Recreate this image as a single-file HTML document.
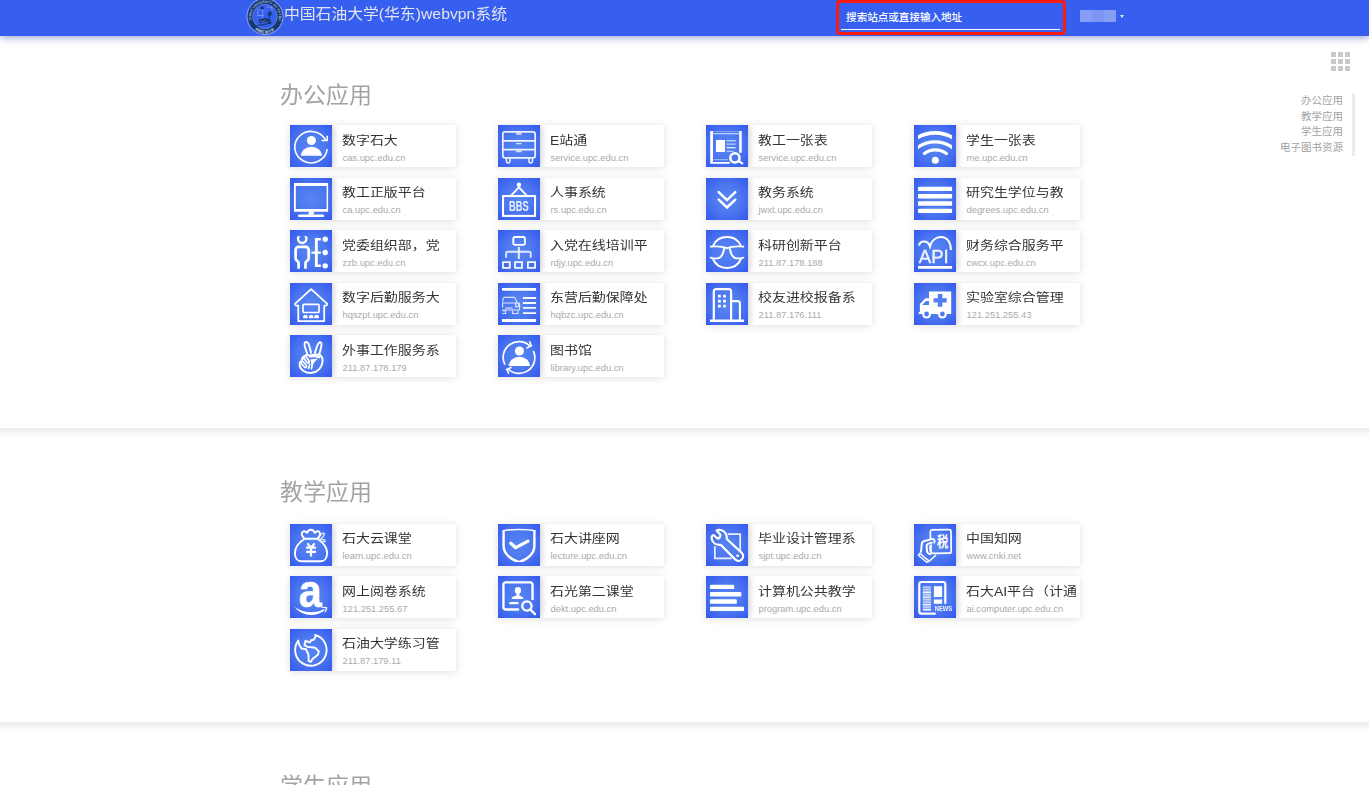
<!DOCTYPE html>
<html lang="zh-CN">
<head>
<meta charset="utf-8">
<title>中国石油大学(华东)webvpn系统</title>
<style>
*{margin:0;padding:0;box-sizing:border-box}
html,body{width:1369px;height:785px;overflow:hidden;background:#fff}
body{position:relative;font-family:"Liberation Sans","Noto Sans CJK SC",sans-serif;color:#333}
a{text-decoration:none;color:inherit}
.sec{position:absolute;left:-30px;width:1429px;background:#fff;box-shadow:0 3px 10px rgba(0,0,0,.1)}
.s1{top:0;height:428px}
.s2{top:428px;height:294px}
.s3{top:722px;height:200px;box-shadow:none}
.sec h2{position:absolute;left:309.6px;font-weight:400;font-size:22.3px;line-height:30px;color:#a3a3a3;white-space:nowrap;transform:scaleX(1.03);transform-origin:0 0}
.s1 h2{top:80.5px}
.s2 h2{top:50px}
.s3 h2{top:50px}
.sec .card{top:0}
.card{position:absolute;margin-left:30px;width:166px;height:42px;background:#fff;box-shadow:0 1px 8px rgba(0,0,0,.13);display:block;overflow:hidden}
.s2 .card{margin-top:-428px}
.ico{position:absolute;left:0;top:0;width:42px;height:42px;background:radial-gradient(circle at 50% 50%,#5685f1 0%,#4d79f0 45%,#3558ee 100%);box-shadow:1px 0 7px rgba(0,0,0,.22)}
.ico svg{display:block}
.tt{position:absolute;left:51.65px;top:7px;width:100px;font-size:12px;line-height:18px;color:#333;white-space:nowrap;overflow:hidden;transform:scaleX(1.163);transform-origin:0 0}
.url{position:absolute;left:52.5px;top:27px;font-size:9.35px;line-height:12px;color:#aaa;white-space:nowrap}
.hdr{position:absolute;left:0;top:0;width:1369px;height:36px;background:#365ff0;box-shadow:0 1px 8px rgba(40,60,170,.55)}
.logo{position:absolute;left:245.5px;top:-2px}
.title{position:absolute;left:283.6px;top:3px;font-size:15.3px;line-height:22px;color:#e3e4ea;white-space:nowrap;transform:scaleX(1.033);transform-origin:0 0}
.search{position:absolute;left:835.5px;top:0;width:230.5px;height:35px;border:3px solid #fc1a10;border-radius:4px}
.ph{position:absolute;left:7.6px;top:6.8px;font-size:10.55px;line-height:14px;font-weight:500;color:#fff;white-space:nowrap}
.ul{position:absolute;left:2.5px;top:25.8px;width:218.6px;height:1.4px;background:#fff}
.user{position:absolute;left:1080px;top:10px;width:36px;height:12px;background:linear-gradient(90deg,#859df5 0,#859df5 33%,#7d96f3 33%,#7d96f3 66%,#859df5 66%,#859df5 100%)}
.caret{position:absolute;left:1120px;top:15px;border:2px solid transparent;border-top:3px solid #e6eaf8;width:0;height:0}
.grid{position:absolute;left:1331px;top:52px;width:20px;height:20px}
.grid i{position:absolute;width:5px;height:5px;background:#c9c9c9}
.grid i:nth-child(3n+1){left:0}.grid i:nth-child(3n+2){left:7px}.grid i:nth-child(3n){left:14px}
.grid i:nth-child(-n+3){top:0}.grid i:nth-child(n+4):nth-child(-n+6){top:7px}.grid i:nth-child(n+7){top:14px}
.nav{position:absolute;right:26px;top:93px;text-align:right;font-size:10.5px;line-height:15.6px;color:#a3a3a3}
.nav a{display:block;white-space:nowrap}
.navbar{position:absolute;left:1352px;top:93px;width:2.5px;height:63px;background:#ececec}

</style>
</head>
<body>
<div class="sec s3"><h2>学生应用</h2></div>
<div class="sec s2"><h2>教学应用</h2>
<a class="card" style="left:290px;top:523.75px"><span class="ico"><svg viewBox="0 0 42 42" width="42" height="42"><g fill="none" stroke="#fff" stroke-linejoin="round"><path d="M14.6 14.8C9 18.5 4.9 23.5 4.9 29C4.9 34 7.5 37.3 11.5 37.3H30.5C34.5 37.3 37.1 34 37.1 29C37.1 23.5 33 18.5 27.4 14.8Z" stroke-width="1.9"/><path d="M14.6 14.8C12.5 12.5 11.3 10.5 11.8 9C12.5 6.8 15.2 6.6 16.9 8.9C18 6.5 19.5 5.8 20.9 5.8C22.3 5.8 23.8 6.5 24.9 8.9C26.6 6.6 29.3 6.8 30 9C30.5 10.5 29.3 12.5 27.4 14.8" stroke-width="1.9"/><path d="M28.6 14.4C30 11 32.5 8.5 34 9.3C35.2 10.2 33 13.5 30 15.8M31 15.9C33 15.2 35.3 15.8 35.2 17C35.1 18 33.5 17.9 32.4 17.3" stroke-width="1.3" opacity=".85"/><path d="M17.4 19.4L21 23.6L24.6 19.4M21 23.6V32.4M16.1 23.7H25.9M16.1 27.8H25.9" stroke-width="2.2"/></g></svg></span><span class="tt" style="margin-top:-0.75px">石大云课堂</span><span class="url" style="margin-top:-0.75px">learn.upc.edu.cn</span></a>
<a class="card" style="left:498px;top:523.75px"><span class="ico"><svg viewBox="0 0 42 42" width="42" height="42"><clipPath id="cs"><rect x="0" y="0" width="42" height="38.1"/></clipPath><g fill="none" stroke="#fff" clip-path="url(#cs)"><path d="M5.6 6.6V22C5.6 29.5 12.5 35.6 21 38.2C29.5 35.6 36.4 29.5 36.4 22V6.6" stroke-width="2.4"/><path d="M4.6 6.9C10 5.6 16 5.4 21 5.4C26 5.4 32 5.6 37.4 6.9" stroke-width="1.5"/></g><path d="M12.8 19.2L17.7 23.7L30 17.2" fill="none" stroke="#fff" stroke-width="3.2" stroke-linecap="round" stroke-linejoin="round"/></svg></span><span class="tt" style="margin-top:-0.75px">石大讲座网</span><span class="url" style="margin-top:-0.75px">lecture.upc.edu.cn</span></a>
<a class="card" style="left:706px;top:523.75px"><span class="ico"><svg viewBox="0 0 42 42" width="42" height="42"><g fill="none" stroke="#fff"><path d="M21.9 10.05H34.15V26.8M8.85 22.2V34.45H25.7" stroke-width="1.7" opacity=".88"/><path d="M14.6 20.8L29.2 35.4A4.6 4.6 0 0 0 35.8 28.9L20.8 15C21.3 11.5 19.5 7.5 15.5 6.3C13.5 5.7 11.5 5.9 10.6 6.6L14.2 10.5C15 12 13.5 14.8 11.5 14.5L7.5 11C6 11.2 5.3 13.2 5.8 15.2C6.8 19 10.5 21.3 14.6 20.8Z" stroke-width="2.2" stroke-linejoin="round"/></g><circle cx="31.6" cy="31.8" r="1.4" fill="#fff"/></svg></span><span class="tt" style="margin-top:-0.75px">毕业设计管理系</span><span class="url" style="margin-top:-0.75px">sjpt.upc.edu.cn</span></a>
<a class="card" style="left:914px;top:523.75px"><span class="ico"><svg viewBox="0 0 42 42" width="42" height="42"><g fill="none" stroke="#fff" stroke-linejoin="round" stroke-linecap="round"><path d="M17.9 5.8L35 5.7A2 2 0 0 1 37 7.7L37.2 27.2A2 2 0 0 1 35.2 29.2L19 29.3A2 2 0 0 1 17 27.3V21.5M16.4 15V7.8A2 2 0 0 1 17.9 5.8" stroke-width="1.7"/><path d="M18.4 14.9L9.8 17.3C8.5 17.7 7.9 18.5 7.8 19.6L7 27.8" stroke-width="2"/><path d="M18.4 14.9C20.5 14.9 21.2 16.8 20.2 18.6" stroke-width="1.9"/><path d="M17.8 18.6L14 19.9C12.9 20.3 12.5 21 12.6 22L13 27C13.2 29 14.6 30.1 16.6 30.1" stroke-width="2"/><path d="M17.5 21L16.4 21.4C15.7 21.7 15.5 22.2 15.6 23L15.9 26.5C16 27.8 16.6 28.5 17.5 28.6" stroke-width="1.3" opacity=".85"/><path d="M21.6 31.4L15.8 36.6" stroke-width="1.6" opacity=".9"/><path d="M5.9 29.2L15.2 37L12.7 38.3L4.3 31.2Z" stroke-width="1.5" opacity=".95"/><path d="M6.6 30.7L13.6 36.7" stroke-width="1" opacity=".6"/></g><text transform="translate(28.6 23.2) scale(.78 1)" text-anchor="middle" font-family="'Noto Sans CJK SC',sans-serif" font-weight="700" font-size="14.6" fill="#fff">税</text></svg></span><span class="tt" style="margin-top:-0.75px">中国知网</span><span class="url" style="margin-top:-0.75px">www.cnki.net</span></a>
<a class="card" style="left:290px;top:576.25px"><span class="ico"><svg viewBox="0 0 42 42" width="42" height="42"><text transform="translate(20.3 30.55) scale(.875 1)" text-anchor="middle" font-family="'Liberation Sans',sans-serif" font-weight="700" font-size="47" fill="#fff" stroke="#fff" stroke-width=".5">a</text><path fill="#fff" d="M4.4 30.8C10 35 16 36.2 21 36.2C26 36.2 30.5 35 33.8 32.9L34.7 34.3C31 37.2 26 39 21 39C15 39 9 36.5 4.4 30.8Z"/><path fill="#fff" d="M31.2 31.3C33.5 30.5 36 30.6 37.3 31.2C37.4 32.9 36.5 35.3 35 36.8L34.4 36.4C35.2 34.9 35.8 33.3 35.7 32.4C34.7 32 33 31.9 31.4 32.1Z"/></svg></span><span class="tt" style="margin-top:-0.25px">网上阅卷系统</span><span class="url" style="margin-top:-0.25px">121.251.255.67</span></a>
<a class="card" style="left:498px;top:576.25px"><span class="ico"><svg viewBox="0 0 42 42" width="42" height="42"><g fill="none" stroke="#fff" stroke-width="2.35"><path d="M20.1 33.5H7.6A2.1 2.1 0 0 1 5.45 31.4V8.5A2.1 2.1 0 0 1 7.6 6.35H32.4A2.1 2.1 0 0 1 34.5 8.5V23" stroke-linecap="round"/><circle cx="28.9" cy="30" r="4.65"/><path d="M32.4 33.7L37 38.1" stroke-linecap="round"/></g><ellipse cx="19.9" cy="14.4" rx="3.1" ry="3.4" fill="#fff"/><path fill="#fff" d="M18.5 16.5h2.8V19.6C22.5 20.4 24.8 20.6 25.4 22.2C25.6 22.8 25.2 23 24.6 23H14.4C13.8 23 13.4 22.8 13.6 22.2C14.2 20.6 16.5 20.4 18.5 19.6Z"/><rect x="11.2" y="26.1" width="9.4" height="2.1" rx="1" fill="#fff"/></svg></span><span class="tt" style="margin-top:-0.25px">石光第二课堂</span><span class="url" style="margin-top:-0.25px">dekt.upc.edu.cn</span></a>
<a class="card" style="left:706px;top:576.25px"><span class="ico"><svg viewBox="0 0 42 42" width="42" height="42"><g fill="#fff"><rect x="4" y="8.8" width="24.25" height="4.3" rx=".9"/><rect x="4" y="16" width="31.3" height="4.6" rx=".9"/><rect x="4" y="23.3" width="26.8" height="4.5" rx=".9"/><rect x="4" y="30.8" width="34.1" height="4.2" rx=".9"/></g></svg></span><span class="tt" style="margin-top:-0.25px">计算机公共教学</span><span class="url" style="margin-top:-0.25px">program.upc.edu.cn</span></a>
<a class="card" style="left:914px;top:576.25px"><span class="ico"><svg viewBox="0 0 42 42" width="42" height="42"><path fill="none" stroke="#fff" stroke-width="2.2" d="M21.7 37.7H7.5A2.2 2.2 0 0 1 5.3 35.5V8.2A2.2 2.2 0 0 1 7.5 6H29.1A2.2 2.2 0 0 1 31.3 8.2V27.8"/><path fill="#fff" d="M19.9 10.2h8.2v10.9h-8.2zM19.9 23.5h8.2v4.3h-8.2z"/><path fill="#fff" opacity=".35" d="M8.8 10.2H17V34.5H8.8z"/><path fill="#fff" opacity=".5" d="M8.8 10.4H17v1.3H8.8zM8.8 12.9H17v1.2H8.8zM8.8 18H17v1.2H8.8zM8.8 23.1H17v1.2H8.8zM8.8 25.6H17v1.2H8.8zM8.8 30.6H17v1.2H8.8z"/><path fill="#fff" opacity=".9" d="M8.8 15.6H17v1.3H8.8zM8.8 20.6H17v1.2H8.8zM8.8 28H17v1.3H8.8zM8.8 33H17v1.5H8.8z"/><text x="20.8" y="34.8" font-family="'Liberation Sans',sans-serif" font-weight="700" font-size="6.7" fill="#fff" opacity=".92" textLength="17.3" lengthAdjust="spacingAndGlyphs">NEWS</text></svg></span><span class="tt" style="margin-top:-0.25px">石大AI平台（计通</span><span class="url" style="margin-top:-0.25px">ai.computer.upc.edu.cn</span></a>
<a class="card" style="left:290px;top:628.75px"><span class="ico"><svg viewBox="0 0 42 42" width="42" height="42"><path fill="none" stroke="#fff" stroke-width="1.9" stroke-linejoin="round" d="M25.1 5.9A15.7 15.7 0 1 1 8.3 11.6L9.1 15.5L11.5 19.5L16.05 20.3L18.5 25.7L18.7 32.2L20.9 32.9L22.5 30L27.8 25.7L28.9 22.5L25.1 18.7L17.7 17.9L14.4 16.05L15.5 11.8L19.8 13.4L21.4 11L23.5 11L25.7 7.5Z"/></svg></span><span class="tt" style="margin-top:-0.75px">石油大学练习管</span><span class="url" style="margin-top:-0.75px">211.87.179.11</span></a>
</div>
<div class="sec s1"><h2>办公应用</h2>
<a class="card" style="left:290px;top:125px"><span class="ico"><svg viewBox="0 0 42 42" width="42" height="42"><g fill="none" stroke="#fff" stroke-width="1.6"><path d="M37.2 24.1A16.25 15.7 0 1 1 35.7 15.3"/><path d="M31.6 15.6H37.2V10.8" stroke-width="1.5"/></g><circle cx="21.4" cy="15.5" r="4.55" fill="#fff"/><path fill="#fff" d="M10.7 30.8a10.7 9 0 0 1 21.4 0z"/></svg></span><span class="tt">数字石大</span><span class="url">cas.upc.edu.cn</span></a>
<a class="card" style="left:498px;top:125px"><span class="ico"><svg viewBox="0 0 42 42" width="42" height="42"><g fill="none" stroke="#fff" stroke-width="1.7" opacity=".9"><rect x="4.85" y="6.85" width="32.3" height="26" rx="2.2"/><path d="M4.85 15.8H37.15M4.85 24.7H37.15"/><path d="M8.4 33.3v2.8a1.8 1.8 0 0 0 3.6 0v-2.8M30.9 33.3v2.8a1.8 1.8 0 0 0 3.6 0v-2.8" stroke-width="1.5"/></g><path fill="#fff" opacity=".8" d="M18.2 7.7h5.3v2.1h-5.3zM18.2 17.9h5.3v1.3h-5.3zM18.2 25.6h5.3v1.6h-5.3z"/></svg></span><span class="tt">E站通</span><span class="url">service.upc.edu.cn</span></a>
<a class="card" style="left:706px;top:125px"><span class="ico"><svg viewBox="0 0 42 42" width="42" height="42"><path fill="#fff" d="M4.2 6h2.8v30.9h16.8v1.9H4.2zM33.2 6h2.5v21.8h-2.5zM9.9 15.1h9.1V27H9.9z"/><path fill="#fff" opacity=".3" d="M7 6h26.2v1.2H7z"/><path fill="#fff" opacity=".6" d="M7 8h26.2v1.4H7z"/><path fill="#fff" opacity=".4" d="M7 34h15v1.3H7z"/><path fill="#fff" opacity=".6" d="M20.6 15.1h9.1v1.3h-9.1zM20.6 18.5h9.1v1.3h-9.1zM20.6 25.7h7v1.3h-7z"/><path fill="#fff" opacity=".9" d="M20.6 22.1h9.1v1.2h-9.1z"/><circle cx="28.9" cy="32.9" r="4.6" fill="none" stroke="#fff" stroke-width="2.6"/><path d="M32.6 36l3.6 2.4" stroke="#fff" stroke-width="2.2" stroke-linecap="round"/></svg></span><span class="tt">教工一张表</span><span class="url">service.upc.edu.cn</span></a>
<a class="card" style="left:914px;top:125px"><span class="ico"><svg viewBox="0 0 42 42" width="42" height="42"><clipPath id="cw"><rect x="4" y="0" width="34.1" height="42"/></clipPath><g fill="none" stroke="#fff" clip-path="url(#cw)"><path d="M2 13.4A35.75 35.75 0 0 1 40 13.4" stroke-width="3.7"/><path d="M2 23.7A29.9 29.9 0 0 1 40 23.7" stroke-width="3.3"/><path d="M10.4 28.5A18.8 18.8 0 0 1 32.4 28.5" stroke-width="3.2" stroke-linecap="round"/></g><circle cx="21.3" cy="35.3" r="3.5" fill="#fff"/></svg></span><span class="tt">学生一张表</span><span class="url">me.upc.edu.cn</span></a>
<a class="card" style="left:290px;top:177.5px"><span class="ico"><svg viewBox="0 0 42 42" width="42" height="42"><path fill="#fff" fill-rule="evenodd" d="M4 4.9h34.1v28.9H4zM5.8 8h30.8v23H5.8z"/><path fill="#fff" d="M18.7 33.5h5.1v3.2h-5.1z"/><rect x="8" y="36.4" width="26.2" height="2.6" rx="1.3" fill="#fff"/></svg></span><span class="tt" style="margin-top:-0.5px">教工正版平台</span><span class="url" style="margin-top:-0.5px">ca.upc.edu.cn</span></a>
<a class="card" style="left:498px;top:177.5px"><span class="ico"><svg viewBox="0 0 42 42" width="42" height="42"><g fill="none" stroke="#fff" stroke-width="2.05"><rect x="5.05" y="18.05" width="32" height="19.85"/><path d="M12.7 17.8L20.9 9.3L29.1 17.8" stroke-width="1.9"/></g><circle cx="20.9" cy="6.8" r="2.2" fill="#fff"/><text x="20.9" y="33.1" text-anchor="middle" font-family="'Liberation Sans',sans-serif" font-weight="700" font-size="14" fill="#fff" opacity=".88" textLength="19.8" lengthAdjust="spacingAndGlyphs">BBS</text></svg></span><span class="tt" style="margin-top:-0.5px">人事系统</span><span class="url" style="margin-top:-0.5px">rs.upc.edu.cn</span></a>
<a class="card" style="left:706px;top:177.5px"><span class="ico"><svg viewBox="0 0 42 42" width="42" height="42"><g fill="none" stroke="#fff" stroke-width="2.5" stroke-linecap="round"><path d="M12.7 14.2L21 22.1L29.3 14.2"/><path d="M12.7 21.6L21 29.5L29.3 21.6"/></g></svg></span><span class="tt" style="margin-top:-0.5px">教务系统</span><span class="url" style="margin-top:-0.5px">jwxt.upc.edu.cn</span></a>
<a class="card" style="left:914px;top:177.5px"><span class="ico"><svg viewBox="0 0 42 42" width="42" height="42"><g fill="#fff"><rect x="4" y="8.8" width="34.1" height="4.3" rx=".9"/><rect x="4" y="16" width="34.1" height="4.6" rx=".9"/><rect x="4" y="23.3" width="34.1" height="4.5" rx=".9"/><rect x="4" y="30.8" width="34.1" height="4.2" rx=".9"/></g></svg></span><span class="tt" style="margin-top:-0.5px">研究生学位与教</span><span class="url" style="margin-top:-0.5px">degrees.upc.edu.cn</span></a>
<a class="card" style="left:290px;top:230px"><span class="ico"><svg viewBox="0 0 42 42" width="42" height="42"><clipPath id="ch"><rect x="0" y="6.2" width="42" height="36"/></clipPath><circle cx="12.2" cy="8.8" r="4.2" fill="none" stroke="#fff" stroke-width="2.4" clip-path="url(#ch)"/><path fill="none" stroke="#fff" stroke-width="2.7" d="M8.6 38.8V33C8.6 30.8 5.6 31 5.6 28.6V20a3.1 3.1 0 0 1 3.1-3.1H15.6a3.1 3.1 0 0 1 3.1 3.1V28.6C18.7 31 15.5 30.8 15.5 33V38.8"/><path fill="#fff" d="M24.9 8h5.9v2.4h-3v11h3v2.4h-3v10.7h3v2.4h-5.9V23.8h-3.5v-2.4h3.5z"/><circle cx="35.2" cy="9.2" r="2.7" fill="#fff"/><circle cx="35.2" cy="22.5" r="2.7" fill="#fff"/><circle cx="35.2" cy="35.85" r="2.7" fill="#fff"/></svg></span><span class="tt">党委组织部，党</span><span class="url">zzb.upc.edu.cn</span></a>
<a class="card" style="left:498px;top:230px"><span class="ico"><svg viewBox="0 0 42 42" width="42" height="42"><g fill="none" stroke="#fff"><rect x="15.3" y="7" width="11.6" height="7.9" rx="1.8" stroke-width="1.85"/><path d="M20.85 17.1V28.9" stroke-width="2" opacity=".85"/><path d="M8.1 27.8V23.2a1.5 1.5 0 0 1 1.5-1.5H31.2a1.5 1.5 0 0 1 1.5 1.5V27.8" stroke-width="1.9" opacity=".8"/><path d="M5 32.05h6.8v5.9H5zM17.05 32.05h6.95v5.9h-6.95zM29.9 32.05h7.2v5.9h-7.2z" stroke-width="1.8" opacity=".95"/></g></svg></span><span class="tt">入党在线培训平</span><span class="url">rdjy.upc.edu.cn</span></a>
<a class="card" style="left:706px;top:230px"><span class="ico"><svg viewBox="0 0 42 42" width="42" height="42"><g fill="none" stroke="#fff"><path d="M7 15.9A15.5 15.5 0 0 1 35 15.9" stroke-width="2.1"/><path d="M7 29.1A15.5 15.5 0 0 0 35 29.1" stroke-width="2.1"/><path d="M4 16.7C10 15.9 16 16.2 21 18.2C26 16.2 32 15.9 38.1 16.7" stroke-width="1.8"/><path d="M18.5 17.6C17.4 22 16.4 28.4 10.5 28.4C7 28.4 4.7 28.7 4.5 26.8M23.5 17.6C24.6 22 25.6 28.4 31.5 28.4C35 28.4 37.4 28.7 37.6 26.8" stroke-width="1.9"/></g></svg></span><span class="tt">科研创新平台</span><span class="url">211.87.178.188</span></a>
<a class="card" style="left:914px;top:230px"><span class="ico"><svg viewBox="0 0 42 42" width="42" height="42"><path fill="none" stroke="#fff" stroke-width="2" d="M5 15.6C5.5 12.6 8 11.4 10 11.4C13.5 11.4 15.3 14 16 16.4C17.5 10.5 22 7 27 7C33 7 36.9 12 36.9 19.9"/><text x="4.75" y="32.9" font-family="'Liberation Sans',sans-serif" font-size="19" fill="#fff" stroke="#fff" stroke-width=".35" opacity=".92" textLength="30" lengthAdjust="spacingAndGlyphs">API</text><path fill="#fff" d="M4 36.1h34.1v2.7H4z"/></svg></span><span class="tt">财务综合服务平</span><span class="url">cwcx.upc.edu.cn</span></a>
<a class="card" style="left:290px;top:282.5px"><span class="ico"><svg viewBox="0 0 42 42" width="42" height="42"><g fill="none" stroke="#fff" stroke-linejoin="round"><path d="M8.3 38.1V22.6H6.4a1.3 1.3 0 0 1-.9-2.3L21.1 6.2L36.7 20.3a1.3 1.3 0 0 1-.9 2.3H34.2V38.1Z" stroke-width="1.8"/><rect x="13" y="21.3" width="16" height="8.2" rx="1" stroke-width="1.7"/></g><path fill="#fff" d="M13.1 35.3v-1.6a1.6 1.6 0 0 1 1.6-1.6h1.4a1.6 1.6 0 0 1 1.6 1.6v1.6zM19 35.3v-1.6a1.6 1.6 0 0 1 1.6-1.6h1.1a1.6 1.6 0 0 1 1.6 1.6v1.6zM24.1 35.3v-1.6a1.6 1.6 0 0 1 1.6-1.6h1.6a1.6 1.6 0 0 1 1.6 1.6v1.6z"/></svg></span><span class="tt" style="margin-top:-0.5px">数字后勤服务大</span><span class="url" style="margin-top:-0.5px">hqszpt.upc.edu.cn</span></a>
<a class="card" style="left:498px;top:282.5px"><span class="ico"><svg viewBox="0 0 42 42" width="42" height="42"><path fill="#fff" d="M4 4.9h34.1v2.9H4zM4 36.1h34.1v2.85H4z"/><path fill="#fff" opacity=".95" d="M24.9 14h13.2v1.9H24.9zM24.9 19h13.2v1.9H24.9zM24.9 24h13.2v1.8H24.9zM24.9 29.2h13.2v1.7H24.9z"/><g fill="none" stroke="#fff" stroke-width="1.1" opacity=".8"><path d="M4.6 19.4C4.8 17 5 14.4 6.5 14.4H16.2C17.3 14.4 18 16.5 19.2 20H21c.5 0 .6.4.6 1v5c0 .6-.3 1-1 1H4.2M4.6 20h14.4M4.6 20v4.5"/><path d="M17.6 20.8h2.9v2.9h-2.9z"/><path d="M4.2 27.8h3.3v2.7H4.2M14.6 27.5v3h5.4v-3"/></g><path fill="#fff" opacity=".6" d="M7.2 24.3h7.5v1.6H7.2z"/></svg></span><span class="tt" style="margin-top:-0.5px">东营后勤保障处</span><span class="url" style="margin-top:-0.5px">hqbzc.upc.edu.cn</span></a>
<a class="card" style="left:706px;top:282.5px"><span class="ico"><svg viewBox="0 0 42 42" width="42" height="42"><g fill="none" stroke="#fff"><path d="M7.8 37V8.7a2.5 2.5 0 0 1 2.5-2.5H22.6a2.5 2.5 0 0 1 2.5 2.5V37" stroke-width="2.2"/><path d="M25.1 18.1H31.9a2 2 0 0 1 2 2V37" stroke-width="2.1"/><path d="M4 37.7H38.1" stroke-width="2.5"/></g><path fill="#fff" d="M12 11.7h2.8v2.8H12zM17.1 11.7h2.8v2.8h-2.8zM12 16.8h2.8v2.8H12zM17.1 16.8h2.8v2.8h-2.8zM12 21.7h2.8v2.8H12zM17.1 21.7h2.8v2.8h-2.8z"/></svg></span><span class="tt" style="margin-top:-0.5px">校友进校报备系</span><span class="url" style="margin-top:-0.5px">211.87.176.111</span></a>
<a class="card" style="left:914px;top:282.5px"><span class="ico"><svg viewBox="0 0 42 42" width="42" height="42"><mask id="mw"><rect width="42" height="42" fill="#fff"/><circle cx="12.6" cy="31" r="2.4" fill="#000"/><circle cx="28.4" cy="31" r="2.4" fill="#000"/></mask><g mask="url(#mw)" fill="#fff"><path fill-rule="evenodd" d="M15 8.5H37.2V31H5.9V30.9H4.8V28.9H5.9V20.9L11.5 15.2H15ZM23.8 11h4.6v4.2h4.3v4.3h-4.3v4.3h-4.6v-4.3h-4.3v-4.3h4.3ZM12 17.9H15V21.9H8Z"/><circle cx="12.6" cy="31" r="4.5"/><circle cx="28.4" cy="31" r="4.5"/></g></svg></span><span class="tt" style="margin-top:-0.5px">实验室综合管理</span><span class="url" style="margin-top:-0.5px">121.251.255.43</span></a>
<a class="card" style="left:290px;top:335px"><span class="ico"><svg viewBox="0 0 42 42" width="42" height="42"><g fill="none" stroke="#fff" stroke-width="1.9" stroke-linecap="round" stroke-linejoin="round"><path d="M17.3 18.9C15.6 14.5 14 9.5 14.7 8C15.4 6.4 17.4 6.7 18.3 8.5C19.3 10.5 20.3 14.5 21 17.8"/><path d="M24.9 18C26 14 27.8 9 28.9 7.8C30 6.7 31.6 7.3 31.5 9.2C31.4 11.5 30.2 16 29.2 19.4"/><path d="M29.2 19.4C31.8 21 32.8 23.5 32.5 26.5C31.9 33 27 38 20.5 38C14.5 38 9.6 34.3 9.6 29.5C9.6 27.5 10.6 26.2 12 25.8C11.7 23.5 12.8 22 14.6 21.7C15.5 19.8 17.6 19.4 19.2 20.6C22.5 19.6 26.5 19.4 29.2 19.4Z"/><path d="M19.8 21.4C23 20.9 27 21.2 29.4 22.3" stroke-width="2.1"/><rect x="-1.35" y="-4" width="2.7" height="8" rx="1.35" transform="translate(16.3 24.4) rotate(-38)" stroke-width="1.7"/><rect x="-1.3" y="-3.6" width="2.6" height="7.2" rx="1.3" transform="translate(13.8 29.4) rotate(-42)" stroke-width="1.7"/><path d="M19.4 29C19.8 30.6 19.4 32.3 18.3 33.4" stroke-width="1.6"/></g><path fill="#fff" d="M20.4 24.6L28.2 23.4C25.5 25.5 23.5 27.5 22.9 30.5C22.7 32 22.6 33.5 22 34.8L20.5 34.2C21.3 31.5 21.6 28 20.4 24.6Z"/></svg></span><span class="tt">外事工作服务系</span><span class="url">211.87.178.179</span></a>
<a class="card" style="left:498px;top:335px"><span class="ico"><svg viewBox="0 0 42 42" width="42" height="42"><g fill="none" stroke="#fff" stroke-width="1.7"><path d="M6.9 29.6A15.8 15.8 0 0 1 32.5 11.6"/><path d="M35.3 15.8A15.8 15.8 0 0 1 9.6 33.5"/><path d="M31.5 6.3L33.3 10.9L28.4 13.3M13.6 32.3L8.7 34.4L10.9 38.6" stroke-width="1.6"/></g><circle cx="21.4" cy="16.05" r="4.55" fill="#fff"/><path fill="#fff" d="M10.7 30.9a10.7 9.1 0 0 1 21.4 0z"/></svg></span><span class="tt">图书馆</span><span class="url">library.upc.edu.cn</span></a>
</div>
<div class="hdr">
<svg class="logo" viewBox="0 0 38 38" width="38" height="38"><circle cx="19" cy="18.5" r="18.1" fill="none" stroke="#c9d3ee" stroke-opacity=".55" stroke-width="1"/><circle cx="19" cy="18.5" r="14.9" fill="none" stroke="#13386b" stroke-width="5"/><circle cx="19" cy="18.5" r="12.3" fill="none" stroke="#b9c6ea" stroke-opacity=".45" stroke-width=".7"/><circle cx="19" cy="18.5" r="17.3" fill="none" stroke="#b9c6ea" stroke-opacity=".3" stroke-width=".5"/><path id="lt" fill="none" d="M5.9 22.6A13.7 13.7 0 1 1 32.1 22.6"/><text font-family="'Liberation Sans',sans-serif" font-weight="700" font-size="3.3" fill="#cdd6ef" fill-opacity=".85" letter-spacing=".05"><textPath href="#lt" startOffset=".6">CHINA UNIVERSITY OF PETROLEUM</textPath></text><path id="lb" fill="none" d="M6.2 29.1A16.6 16.6 0 0 0 31.8 29.1"/><text font-family="'Noto Sans CJK SC',sans-serif" font-weight="700" font-size="3.5" fill="#d6def3" fill-opacity=".9"><textPath href="#lb" startOffset="3.4">中国石油大学</textPath></text><g fill="#13386b"><path d="M16.2 8L18.2 10L16.2 12L14.2 10Z"/><path d="M23.7 13C25.3 13.3 26.1 15 25.6 16.4C25 17.9 23.3 18.3 22.1 17.4C21.2 16.5 21.7 15 22.7 14.6Z"/><path d="M12.5 21.4L20.3 19.9L24.6 22.3V25.2H22.2L21.7 23.3L15.4 25.2L13.5 24.8Z"/><path d="M10.6 27.2L25.6 24.3V25.4L10.8 28.3Z"/><path d="M22.6 18.2h1.2v3.5h-1.2z"/></g><g fill="none" stroke="#b9c6e8" stroke-opacity=".7" stroke-width=".7"><path d="M11.8 10.7V17.5H17.4M16.7 12.7V20M14 11.2C14.6 12.8 17.8 12.8 18.4 11.2M20.4 9.4L22 8.6L23.8 9.6H26V12.5M14.6 22.6L16.4 24.2L19.5 22"/></g></svg>
<div class="title">中国石油大学(华东)webvpn系统</div>
<div class="search"><span class="ph">搜索站点或直接输入地址</span><i class="ul"></i></div>
<div class="user"></div><i class="caret"></i>
</div>
<div class="grid"><i></i><i></i><i></i><i></i><i></i><i></i><i></i><i></i><i></i></div>
<div class="nav"><a>办公应用</a><a>教学应用</a><a>学生应用</a><a>电子图书资源</a></div>
<i class="navbar"></i>
</body>
</html>
